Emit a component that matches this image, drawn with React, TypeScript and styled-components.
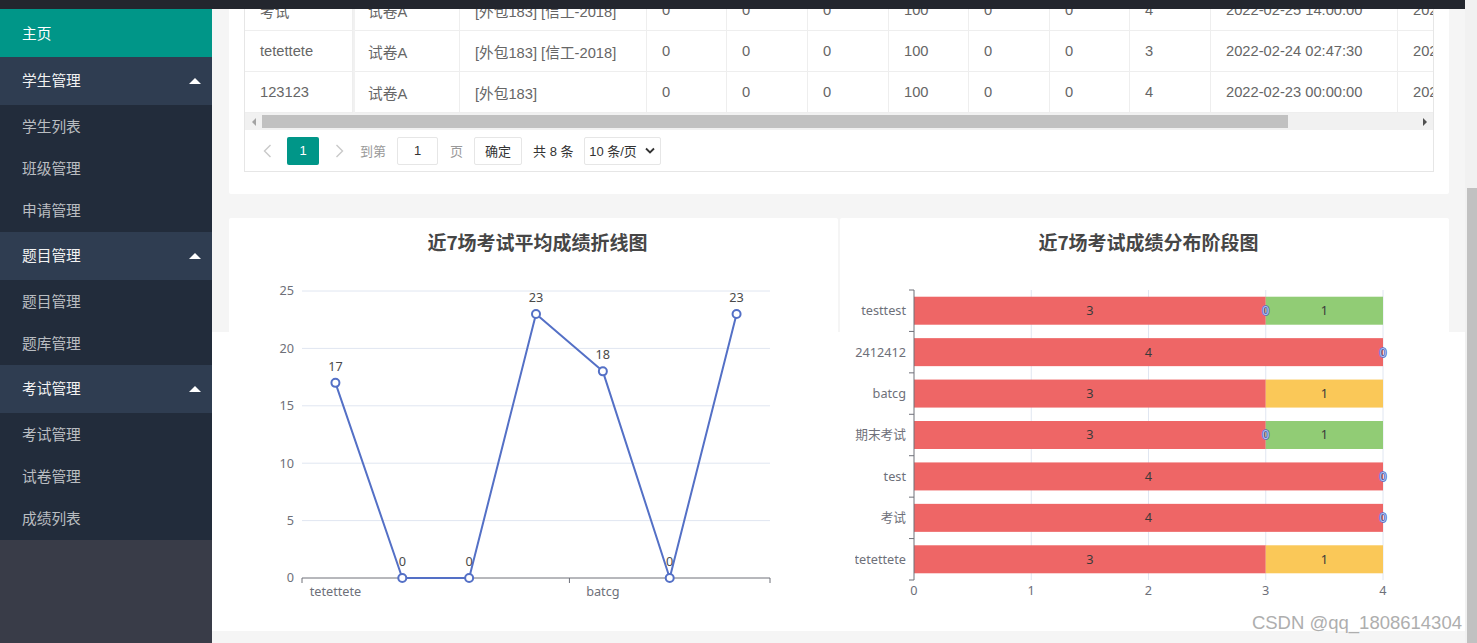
import React from "react";
import styled, { createGlobalStyle } from "styled-components";

const GlobalStyle = createGlobalStyle`
  html, body {
    margin: 0;
    padding: 0;
    overflow: hidden;
  }
  body {
    font-family: "Liberation Sans", "Noto Sans CJK SC", sans-serif;
    background: #fff;
  }
  * {
    box-sizing: border-box;
  }
`;

const Shell = styled.div`
  position: relative;
  display: flex;
  width: 1477px;
  height: 643px;
  overflow: hidden;
`;

const Page = styled.div`
  flex: 1;
  min-width: 0;
  display: flex;
  flex-direction: column;
`;

const TopBar = styled.header`
  height: 9px;
  flex-shrink: 0;
  background: #23262e;
`;

const Body = styled.div`
  flex: 1;
  min-height: 0;
  display: flex;
`;

/* ---------- sidebar ---------- */

const Sidebar = styled.nav`
  width: 212px;
  flex-shrink: 0;
  background: #393c48;
  font-size: 14.7px;
`;

const HomeItem = styled.a`
  display: flex;
  align-items: center;
  height: 48px;
  padding: 0 0 2px 22px;
  background: #009688;
  color: #fff;
`;

const GroupHeader = styled.div`
  display: flex;
  align-items: center;
  justify-content: space-between;
  height: 48px;
  padding: 0 11px 3px 22px;
  background: #2f3d51;
  color: #f2f2f2;
`;

const Caret = styled.span`
  width: 0;
  height: 0;
  margin-top: 2px;
  border-left: 6px solid transparent;
  border-right: 6px solid transparent;
  border-bottom: 6px solid #fff;
`;

const SubList = styled.div`
  padding-bottom: 1px;
  background: #222c3b;
`;

const SubItem = styled.a`
  display: flex;
  align-items: center;
  height: 42px;
  padding: 0 0 2px 22px;
  color: rgba(255, 255, 255, 0.7);
`;

/* ---------- main ---------- */

const Main = styled.main`
  flex: 1;
  min-width: 0;
  display: flex;
  flex-direction: column;
  overflow: hidden;
  background: linear-gradient(to bottom, #f5f5f5 0, #f5f5f5 323px, #fff 323px);
`;

const Content = styled.div`
  display: flex;
  flex-direction: column;
  gap: 24px;
  padding: 0 16px 0 17px;
`;

const Footer = styled.div`
  flex: 1;
  background: #f5f5f5;
`;

const Card = styled.section`
  background: #fff;
  border-radius: 2px;
`;

const TableCard = styled(Card)`
  margin-top: -35px;
  padding: 15px 15px 22px;
`;

const TableBox = styled.div`
  border: 1px solid #e6e6e6;
`;

const Viewport = styled.div`
  overflow: hidden;
`;

const COLS = [108, 107, 187, 80, 81, 81, 80, 81, 80, 81, 187, 187];

const Row = styled.div`
  display: grid;
  grid-template-columns: ${COLS.map((c) => `${c}px`).join(" ")};
  width: ${COLS.reduce((a, b) => a + b, 0)}px;
`;

const Cell = styled.div<{ $fixed?: boolean }>`
  display: flex;
  align-items: center;
  height: 41px;
  padding: 0 15px;
  border-right: 1px solid #eee;
  border-bottom: 1px solid #eee;
  color: #666;
  font-size: 14.7px;
  white-space: nowrap;
  overflow: hidden;
  box-shadow: ${(p) => (p.$fixed ? "2px 0 0 #f1f1f1" : "none")};
  position: ${(p) => (p.$fixed ? "relative" : "static")};
  z-index: ${(p) => (p.$fixed ? 1 : 0)};
  background: #fff;
`;

const HScroll = styled.div`
  display: flex;
  align-items: center;
  height: 17px;
  background: #f1f1f1;
`;

const ScrollBtn = styled.div`
  width: 17px;
  height: 17px;
  display: flex;
  align-items: center;
  justify-content: center;
  flex-shrink: 0;
`;

const Tri = styled.span<{ $dir: "left" | "right" }>`
  width: 0;
  height: 0;
  border-top: 4px solid transparent;
  border-bottom: 4px solid transparent;
  ${(p) =>
    p.$dir === "left"
      ? "border-right: 4px solid #a3a3a3;"
      : "border-left: 4px solid #505050;"}
`;

const HThumb = styled.div`
  width: 1026px;
  height: 13px;
  background: #c1c1c1;
`;

const HSpacer = styled.div`
  flex: 1;
`;

const Pager = styled.div`
  display: flex;
  align-items: center;
  height: 41px;
  padding-left: 2px;
  font-size: 13px;
  color: #333;
`;

const PageArrow = styled.span`
  width: 40px;
  height: 28px;
  display: flex;
  align-items: center;
  justify-content: center;
`;

const PageCurrent = styled.span`
  width: 32px;
  height: 28px;
  display: flex;
  align-items: center;
  justify-content: center;
  background: #009688;
  color: #fff;
  border-radius: 2px;
`;

const PagerText = styled.span<{ $muted?: boolean; $ml: number }>`
  margin-left: ${(p) => p.$ml}px;
  color: ${(p) => (p.$muted ? "#999" : "#333")};
  white-space: nowrap;
`;

const PagerBox = styled.span<{ $w: number; $ml: number }>`
  margin-left: ${(p) => p.$ml}px;
  width: ${(p) => p.$w}px;
  height: 28px;
  display: flex;
  align-items: center;
  justify-content: center;
  gap: 8px;
  border: 1px solid #e6e6e6;
  border-radius: 2px;
  background: #fff;
  color: #333;
`;

const ChartRow = styled.div`
  display: grid;
  grid-template-columns: 1fr 1fr;
  gap: 2px;
  height: 413px;
`;

const ChartCard = styled(Card)`
  display: flex;
  flex-direction: column;
  padding: 10px 15px 0;
`;

const ChartTitle = styled.h3`
  margin: 0;
  height: 28px;
  padding-left: 8px;
  line-height: 28px;
  text-align: center;
  font-family: "Noto Sans CJK SC", "Noto Sans", sans-serif;
  font-size: 19px;
  font-weight: 700;
  color: #464646;
`;

const ChartSvg = styled.svg`
  display: block;
  font-family: "Noto Sans", "Noto Sans CJK SC", sans-serif;
  font-size: 12.7px;
`;

const VScroll = styled.div`
  width: 12px;
  flex-shrink: 0;
  display: flex;
  flex-direction: column;
  padding-top: 188px;
  background: #f1f1f1;
`;

const VThumb = styled.div`
  flex: 1;
  margin-left: 2px;
  background: #c1c1c1;
`;

const Watermark = styled.div`
  position: absolute;
  right: 15px;
  top: 612px;
  font-family: "Liberation Sans", sans-serif;
  font-size: 18.5px;
  color: #aeaeae;
  text-shadow: 0 0 2px #fff;
  pointer-events: none;
`;

/* ---------- data ---------- */

const menu = [
  { label: "学生管理", children: ["学生列表", "班级管理", "申请管理"] },
  { label: "题目管理", children: ["题目管理", "题库管理"] },
  { label: "考试管理", children: ["考试管理", "试卷管理", "成绩列表"] },
];

const rows = [
  ["考试", "试卷A", "[外包183] [信工-2018]", "0", "0", "0", "100", "0", "0", "4", "2022-02-25 14:00:00", "2022-02-25 16:00:00"],
  ["tetettete", "试卷A", "[外包183] [信工-2018]", "0", "0", "0", "100", "0", "0", "3", "2022-02-24 02:47:30", "2022-02-24 04:47:30"],
  ["123123", "试卷A", "[外包183]", "0", "0", "0", "100", "0", "0", "4", "2022-02-23 00:00:00", "2022-02-23 02:00:00"],
];

const AXIS = "#6e7079";
const SPLIT = "#e0e6f1";
const BLUE = "#5470c6";

/* ---------- charts ---------- */

const LineChart: React.FC = () => {
  const data = [17, 0, 0, 23, 18, 0, 23];
  const left = 58;
  const right = 526;
  const y0 = 322;
  const unit = (322 - 35) / 25;
  const band = (right - left) / data.length;
  const px = (i: number) => left + band * (i + 0.5);
  const py = (v: number) => y0 - v * unit;
  const pts = data.map((v, i) => `${px(i)},${py(v)}`).join(" ");
  return (
    <ChartSvg width={579} height={375}>
      {[0, 5, 10, 15, 20, 25].map((v) => (
        <g key={v}>
          {v > 0 && <line x1={left} x2={right} y1={py(v)} y2={py(v)} stroke={SPLIT} />}
          <text x={50} y={py(v)} dy="0.35em" textAnchor="end" fill={AXIS}>
            {v}
          </text>
        </g>
      ))}
      <line x1={left} x2={right} y1={y0} y2={y0} stroke={AXIS} />
      {[0, 4, 7].map((i) => (
        <line key={i} x1={left + band * i} x2={left + band * i} y1={y0} y2={y0 + 5} stroke={AXIS} />
      ))}
      <text x={px(0)} y={336} dy="0.35em" textAnchor="middle" fill={AXIS}>
        tetettete
      </text>
      <text x={px(4)} y={336} dy="0.35em" textAnchor="middle" fill={AXIS}>
        batcg
      </text>
      <polyline points={pts} fill="none" stroke={BLUE} strokeWidth={2} strokeLinejoin="round" />
      {data.map((v, i) => (
        <g key={i}>
          <circle cx={px(i)} cy={py(v)} r={4} fill="#fff" stroke={BLUE} strokeWidth={2} />
          <text x={px(i)} y={py(v) - 12} textAnchor="middle" fill="#4a4a4a">
            {v}
          </text>
        </g>
      ))}
    </ChartSvg>
  );
};

type Seg = { v: number; color: string };

const bars: { name: string; red: number; zero: boolean; rest?: Seg }[] = [
  { name: "testtest", red: 3, zero: true, rest: { v: 1, color: "#91cc75" } },
  { name: "12412412", red: 4, zero: true },
  { name: "batcg", red: 3, zero: false, rest: { v: 1, color: "#fac858" } },
  { name: "期末考试", red: 3, zero: true, rest: { v: 1, color: "#91cc75" } },
  { name: "test", red: 4, zero: true },
  { name: "考试", red: 4, zero: true },
  { name: "tetettete", red: 3, zero: false, rest: { v: 1, color: "#fac858" } },
];

const BarChart: React.FC = () => {
  const ax = 59;
  const unit = 117.25;
  const top = 34;
  const bottom = 324;
  const band = (bottom - top) / bars.length;
  const barH = 28;
  const vx = (v: number) => ax + v * unit;
  return (
    <ChartSvg width={579} height={375}>
      {[1, 2, 3, 4].map((v) => (
        <line key={v} x1={vx(v)} x2={vx(v)} y1={top} y2={bottom} stroke={SPLIT} />
      ))}
      {bars.map((b, i) => {
        const cy = top + band * (i + 0.5);
        const by = cy - barH / 2;
        return (
          <g key={b.name}>
            <text x={51} y={cy} dy="0.35em" textAnchor="end" fill={AXIS}>
              {b.name}
            </text>
            <rect x={ax} y={by} width={b.red * unit} height={barH} fill="#ee6666" />
            <text x={vx(b.red / 2)} y={cy} dy="0.35em" textAnchor="middle" fill="#3a3a3a">
              {b.red}
            </text>
            {b.rest && (
              <>
                <rect x={vx(b.red)} y={by} width={b.rest.v * unit} height={barH} fill={b.rest.color} />
                <text x={vx(b.red + b.rest.v / 2)} y={cy} dy="0.35em" textAnchor="middle" fill="#3a3a3a">
                  {b.rest.v}
                </text>
              </>
            )}
            {b.zero && (
              <text
                x={vx(b.red)}
                y={cy}
                dy="0.35em"
                textAnchor="middle"
                fill="#b3c1ee"
                stroke="#4d67bd"
                strokeWidth={1.6}
                paintOrder="stroke"
              >
                0
              </text>
            )}
          </g>
        );
      })}
      <line x1={ax} x2={ax} y1={top} y2={bottom} stroke={AXIS} />
      {bars.map((_, i) => (
        <line key={i} x1={ax - 5} x2={ax} y1={top + band * i} y2={top + band * i} stroke={AXIS} />
      ))}
      <line x1={ax - 5} x2={ax} y1={bottom} y2={bottom} stroke={AXIS} />
      {[0, 1, 2, 3, 4].map((v) => (
        <text key={v} x={vx(v)} y={335} dy="0.35em" textAnchor="middle" fill={AXIS}>
          {v}
        </text>
      ))}
    </ChartSvg>
  );
};

/* ---------- app ---------- */

const Chevron: React.FC<{ dir: "left" | "right" }> = ({ dir }) => (
  <svg width="9" height="14" viewBox="0 0 9 14">
    <polyline
      points={dir === "left" ? "7.5,1 1.5,7 7.5,13" : "1.5,1 7.5,7 1.5,13"}
      fill="none"
      stroke="#c9c9c9"
      strokeWidth={1.4}
    />
  </svg>
);

const App: React.FC = () => {
  return (
    <>
      <GlobalStyle />
      <Shell>
        <Page>
          <TopBar />
          <Body>
            <Sidebar>
              <HomeItem>主页</HomeItem>
              {menu.map((g) => (
                <div key={g.label}>
                  <GroupHeader>
                    {g.label}
                    <Caret />
                  </GroupHeader>
                  <SubList>
                    {g.children.map((c) => (
                      <SubItem key={c}>{c}</SubItem>
                    ))}
                  </SubList>
                </div>
              ))}
            </Sidebar>
            <Main>
              <Content>
                <TableCard>
                  <TableBox>
                    <Viewport>
                      {rows.map((r, ri) => (
                        <Row key={ri}>
                          {r.map((c, ci) => (
                            <Cell key={ci} $fixed={ci === 0}>
                              {c}
                            </Cell>
                          ))}
                        </Row>
                      ))}
                    </Viewport>
                    <HScroll>
                      <ScrollBtn>
                        <Tri $dir="left" />
                      </ScrollBtn>
                      <HThumb />
                      <HSpacer />
                      <ScrollBtn>
                        <Tri $dir="right" />
                      </ScrollBtn>
                    </HScroll>
                    <Pager>
                      <PageArrow>
                        <Chevron dir="left" />
                      </PageArrow>
                      <PageCurrent>1</PageCurrent>
                      <PageArrow>
                        <Chevron dir="right" />
                      </PageArrow>
                      <PagerText $muted $ml={1}>
                        到第
                      </PagerText>
                      <PagerBox $w={41} $ml={11}>
                        1
                      </PagerBox>
                      <PagerText $muted $ml={12}>
                        页
                      </PagerText>
                      <PagerBox $w={48} $ml={11}>
                        确定
                      </PagerBox>
                      <PagerText $ml={11}>共 8 条</PagerText>
                      <PagerBox $w={77} $ml={10}>
                        10 条/页
                        <svg width="10" height="7" viewBox="0 0 10 7">
                          <polyline points="1,1.5 5,5.5 9,1.5" fill="none" stroke="#333" strokeWidth={1.8} />
                        </svg>
                      </PagerBox>
                    </Pager>
                  </TableBox>
                </TableCard>
                <ChartRow>
                  <ChartCard>
                    <ChartTitle>近7场考试平均成绩折线图</ChartTitle>
                    <LineChart />
                  </ChartCard>
                  <ChartCard>
                    <ChartTitle>近7场考试成绩分布阶段图</ChartTitle>
                    <BarChart />
                  </ChartCard>
                </ChartRow>
              </Content>
              <Footer />
            </Main>
          </Body>
        </Page>
        <VScroll>
          <VThumb />
        </VScroll>
        <Watermark>CSDN @qq_1808614304</Watermark>
      </Shell>
    </>
  );
};

export default App;
